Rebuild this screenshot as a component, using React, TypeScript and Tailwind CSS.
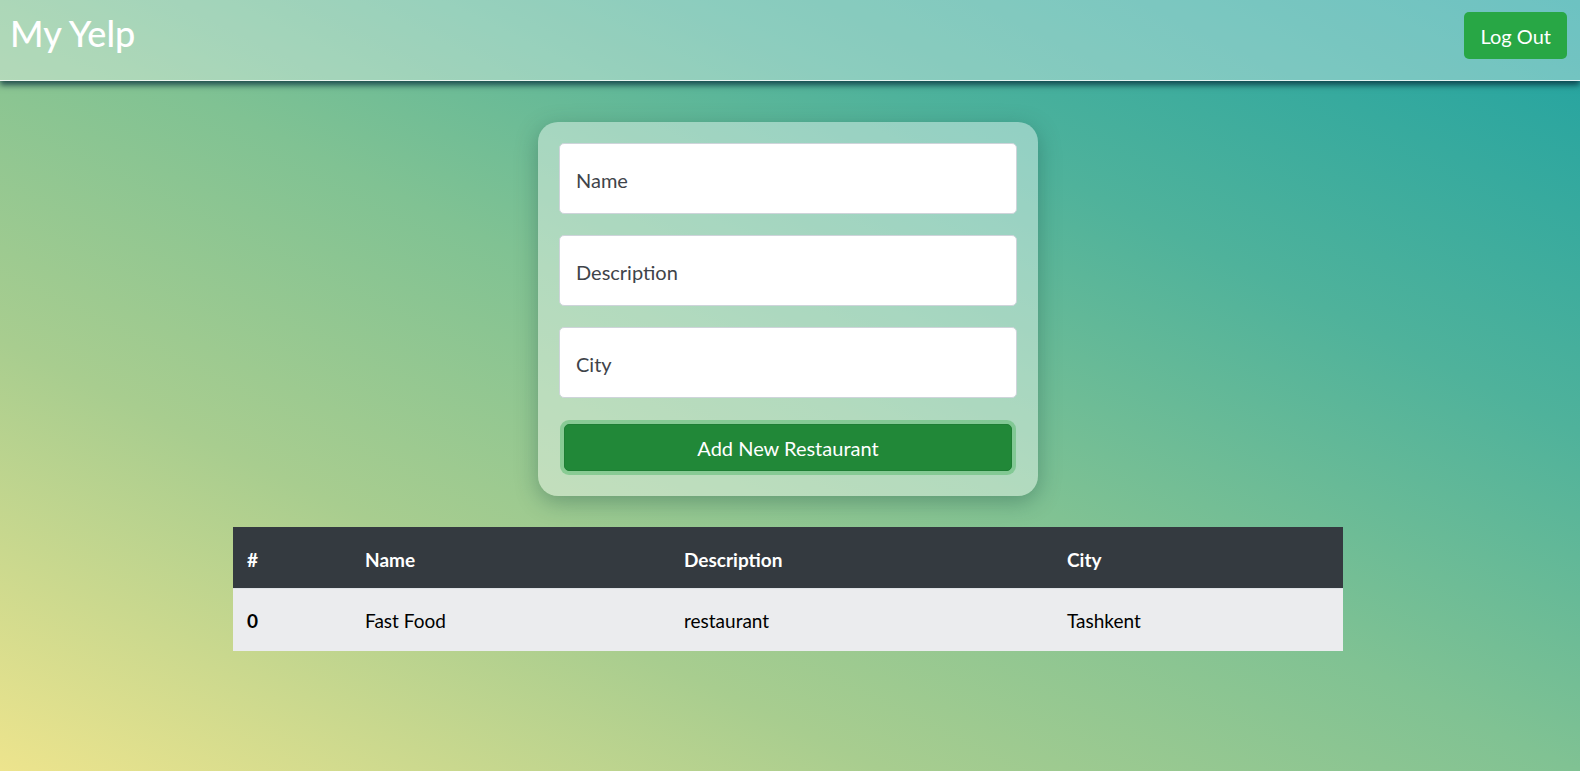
export default function App() {
    const rows = [{ id: 0, name: "Fast Food", description: "restaurant", city: "Tashkent" }];

    return (
        <div className="min-h-screen w-full bg-[linear-gradient(to_top_right,#ede48d_0%,#a8cd8f_28%,#80c293_50%,#4fb29b_72%,#1fa2a1_100%)] font-['Lato','Open_Sans',sans-serif]">
            {/* Navbar */}
            <div className="h-[81px] flex items-start justify-between bg-white/35 border-b border-white/80 shadow-[0_4px_6px_rgba(0,40,55,0.75)]">
                <div className="pl-[10px] pt-[10px] text-[36px] leading-[46px] font-medium text-white">My Yelp</div>
                <button className="mt-[12px] mr-[13px] h-[47px] px-[16px] rounded-[5px] bg-[#28a745] text-white text-[20px]">
                    Log Out
                </button>
            </div>

            <div className="flex flex-col items-center pr-[4px] pt-[41px]">
                {/* Form card */}
                <div className="w-[500px] rounded-[20px] bg-white/40 p-[21px] pb-[25px] shadow-[0_6px_22px_rgba(20,70,60,0.35)] flex flex-col gap-[21px]">
                    {["Name", "Description", "City"].map((p) => (
                        <input
                            key={p}
                            placeholder={p}
                            className="h-[71px] w-full rounded-[5px] border border-[#ced4da] bg-white px-[16px] pt-[3px] text-[20px] text-[#495057] placeholder:text-[#3f444a] outline-none"
                        />
                    ))}
                    <button className="mt-[5px] mx-[5px] h-[47px] rounded-[5px] bg-[#218838] border border-[#1e7e34] text-white text-[20px] shadow-[0_0_0_4px_rgba(100,190,120,0.6)]">
                        Add New Restaurant
                    </button>
                </div>

                {/* Table */}
                <table className="mt-[31px] w-[1110px] text-[19px] text-black">
                    <thead>
                        <tr className="bg-[#343a40] text-white h-[61px]">
                            <th className="w-[120px] px-[14px] pt-[5px] text-left font-bold">#</th>
                            <th className="w-[319px] px-[12px] pt-[5px] text-left font-bold">Name</th>
                            <th className="w-[383px] px-[12px] pt-[5px] text-left font-bold">Description</th>
                            <th className="px-[12px] pt-[5px] text-left font-bold">City</th>
                        </tr>
                    </thead>
                    <tbody>
                        {rows.map((r) => (
                            <tr key={r.id} className="bg-[#ebecee] h-[63px] border-t border-[#dee2e6]">
                                <td className="px-[14px] pt-[3px] font-bold">{r.id}</td>
                                <td className="px-[12px] pt-[3px]">{r.name}</td>
                                <td className="px-[12px] pt-[3px]">{r.description}</td>
                                <td className="px-[12px] pt-[3px]">{r.city}</td>
                            </tr>
                        ))}
                    </tbody>
                </table>
            </div>
        </div>
    )
}
